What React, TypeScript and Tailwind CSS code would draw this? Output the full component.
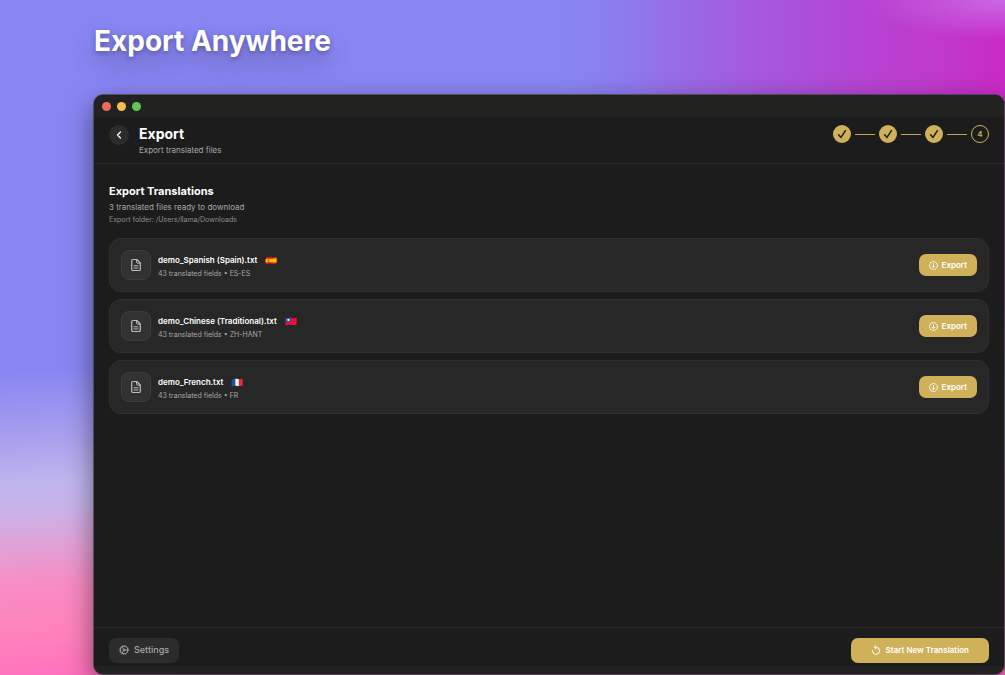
import React from 'react';
import { ChevronLeft } from 'lucide-react';

const files = [
  { name: 'demo_Spanish (Spain).txt', fields: 43, code: 'ES-ES', flag: 'es' },
  { name: 'demo_Chinese (Traditional).txt', fields: 43, code: 'ZH-HANT', flag: 'tw' },
  { name: 'demo_French.txt', fields: 43, code: 'FR', flag: 'fr' },
];

const steps = [1, 2, 3, 4];
const currentStep = 4;

const Flag: React.FC<{ code: string }> = ({ code }) => {
  const wave = 'M.6 1.6C3 .6 5 .7 7 1s3 .1 4.600-.5v7C9.800 8.200 8.500 8.200 6.500 7.900S2.500 7.800.6 8.500z';
  return (
    <svg className="w-3 h-[9px]" viewBox="0 0 12 9" aria-hidden="true">
      <clipPath id={`flag-${code}`}>
        <path d={wave} />
      </clipPath>
      <g clipPath={`url(#flag-${code})`}>
        {code === 'es' && (
          <>
            <rect width="12" height="9" fill="#d9141c" />
            <path d="M0 3.200C4 2 7 3.300 12 2.300v3.900C8 7 4 5.600 0 6.800z" fill="#fdc900" />
            <rect x="2.500" y="3.500" width="2" height="2" rx=".5" fill="#b5562c" />
          </>
        )}
        {code === 'tw' && (
          <>
            <rect width="12" height="9" fill="#ee1038" />
            <rect width="6" height="4.800" fill="#1c57b5" />
            <circle cx="3.400" cy="2.900" r="1.100" fill="#fff" />
          </>
        )}
        {code === 'fr' && (
          <>
            <rect width="4.300" height="9" fill="#1356a5" />
            <rect x="4.300" width="3.600" height="9" fill="#f4f4f4" />
            <rect x="7.900" width="4.100" height="9" fill="#ec2a36" />
          </>
        )}
      </g>
    </svg>
  );
};

const CheckIcon = () => (
  <svg className="w-2.5 h-2.5" viewBox="0 0 10 10" fill="none" stroke="currentColor" strokeWidth="1.500" strokeLinecap="round" strokeLinejoin="round" aria-hidden="true">
    <path d="M1.600 5.700L4 8.400L8.400 1.600" />
  </svg>
);

const FileIcon = () => (
  <svg className="w-3 h-3.5" viewBox="0 0 12 14" fill="none" stroke="currentColor" strokeWidth="1.200" strokeLinejoin="round" strokeLinecap="round" aria-hidden="true">
    <path d="M6.800 1.500H3A1.300 1.300 0 0 0 1.700 2.800v8.400A1.300 1.300 0 0 0 3 12.500h6a1.300 1.300 0 0 0 1.300-1.300V5z" />
    <path d="M6.600 1.700V4a1.200 1.200 0 0 0 1.200 1.200h2.300M4 7.800h4M4 10h4" strokeWidth="1" />
  </svg>
);

const DownloadIcon = () => (
  <svg className="w-[9px] h-[9px]" viewBox="0 0 9 9" fill="none" stroke="currentColor" strokeWidth=".8" strokeLinecap="round" strokeLinejoin="round" aria-hidden="true">
    <circle cx="4.500" cy="4.500" r="4" />
    <path d="M4.500 2.400v4M3 5.100l1.500 1.500L6 5.100" />
  </svg>
);

const GearIcon = () => (
  <svg className="w-2.5 h-2.5" viewBox="0 0 10 10" fill="none" stroke="currentColor" strokeLinecap="round" aria-hidden="true">
    <circle cx="5" cy="5" r="3.800" />
    <circle cx="5" cy="5" r="4.500" strokeWidth=".8" strokeDasharray="1 1.360" strokeLinecap="butt" />
    <path d="M5.900 5H8.800M4.500 4.200L3 1.800M4.500 5.800L3 8.200" strokeWidth=".8" />
    <circle cx="5" cy="5" r="1" strokeWidth=".8" />
  </svg>
);

const RestartIcon = () => (
  <svg className="w-2.5 h-2.5" viewBox="0 0 10 10" fill="none" stroke="currentColor" strokeLinecap="round" strokeLinejoin="round" aria-hidden="true">
    <path d="M1.400 5.600A3.600 3.600 0 1 0 5 2.200H3.400" />
    <path d="M4.900.6L3.200 2.200l1.700 1.700" />
  </svg>
);

const Stepper = () => (
  <ol className="flex items-center gap-1">
    {steps.map((step) => (
      <React.Fragment key={step}>
        {step > 1 && <li aria-hidden="true" className="w-5 h-px bg-[#c0a454]" />}
        {step < currentStep ? (
          <li className="w-[18px] h-[18px] rounded-full bg-[#cfb15a] text-[#1c1c1c] flex items-center justify-center">
            <CheckIcon />
          </li>
        ) : (
          <li className="w-[18px] h-[18px] rounded-full border border-[#cfb15a] text-[#cfb15a] text-[8px] font-semibold flex items-center justify-center">
            {step}
          </li>
        )}
      </React.Fragment>
    ))}
  </ol>
);

const App: React.FC = () => {
  return (
    <div className="min-h-screen flex flex-col overflow-hidden pl-[94px] pr-px pb-px font-['Inter',sans-serif] bg-[#8886f2] bg-[radial-gradient(ellipse_140px_40px_at_100%_0%,#c969e4_0%,transparent_100%),linear-gradient(176deg,transparent_50%,#a99fee_59%,#c0b5ee_65%,#cab2e9_69%,#e29fd5_74%,#f88cc3_79%,#ff82bb_85%,#ff6dbf_93%),linear-gradient(to_right,#8886f3_0%,#8886f3_56%,#8c7bee_62%,#9a68e4_69%,#a45bdf_74%,#ac4fda_80%,#b842d2_87%,#bf3acc_93%,#c92ac6_100%)]">
      <header className="h-[95px] shrink-0 pt-[23px]">
        <h1 className="text-[28px] leading-9 font-bold text-white [text-shadow:0_2px_5px_rgb(0_0_0/0.3),0_12px_24px_rgb(0_0_0/0.3)]">
          Export Anywhere
        </h1>
      </header>

      <div className="flex-1 flex flex-col rounded-[9px] overflow-hidden bg-[#1c1c1c] shadow-[0_0_0_1px_rgb(70_70_74/0.8),0_10px_28px_rgb(0_0_0/0.5)]">
        <div className="h-[22px] shrink-0 flex items-center gap-1.5 px-2 bg-[#222220]">
          <span className="w-[9px] h-[9px] rounded-full bg-[#ed6a5f]" />
          <span className="w-[9px] h-[9px] rounded-full bg-[#f5bf4f]" />
          <span className="w-[9px] h-[9px] rounded-full bg-[#61c554]" />
        </div>

        <div className="h-[47px] shrink-0 flex items-start justify-between px-[15px] pt-2 border-b border-[#2b2b2b]">
          <div className="flex items-start gap-2.5">
            <button aria-label="Back" className="w-5 h-5 rounded-full bg-[#2c2c2c] text-white flex items-center justify-center">
              <ChevronLeft size={12} strokeWidth={2.5} />
            </button>
            <div>
              <h2 className="text-[14px] leading-[18px] font-bold text-white">Export</h2>
              <p className="text-[8px] leading-[14px] text-[#a8a8a8]">Export translated files</p>
            </div>
          </div>
          <Stepper />
        </div>

        <main className="flex-1 px-[15px] pt-[19px]">
          <h3 className="text-[11px] leading-4 font-bold text-white">Export Translations</h3>
          <p className="text-[8px] leading-4 text-[#a8a8a8]">3 translated files ready to download</p>
          <p className="text-[7px] leading-[10px] text-[#8c8c8c]">Export folder: /Users/llama/Downloads</p>

          <ul className="mt-[13px] flex flex-col gap-[7px]">
            {files.map((file) => (
              <li key={file.code} className="h-[54px] flex items-center gap-[7px] px-[11px] rounded-xl border border-[#303030] bg-[#272727]">
                <div className="w-[30px] h-[30px] rounded-lg border border-[#3c3c3c] bg-[#323232] text-[#bcbcbc] flex items-center justify-center">
                  <FileIcon />
                </div>
                <div className="flex-1 pt-[3px]">
                  <div className="flex items-center gap-2">
                    <span className="text-[8px] leading-[13px] font-semibold text-white">{file.name}</span>
                    <Flag code={file.flag} />
                  </div>
                  <p className="text-[7px] leading-[13px] text-[#a8a8a8]">
                    {file.fields} translated fields • {file.code}
                  </p>
                </div>
                <button className="h-[22px] px-2.5 flex items-center gap-1 rounded-[7px] bg-[#cfb15a] text-white text-[8px] font-semibold">
                  <DownloadIcon />
                  Export
                </button>
              </li>
            ))}
          </ul>
        </main>

        <footer className="h-[39px] shrink-0 flex items-center justify-between px-[15px] pt-1.5 border-t border-[#2b2b2b]">
          <button className="h-[25px] px-2.5 flex items-center gap-[5px] rounded-[7px] bg-[#2c2c2c] text-[#a8a8a8] text-[9px] font-medium">
            <GearIcon />
            Settings
          </button>
          <button className="h-[25px] px-5 flex items-center gap-[5px] rounded-[7px] bg-[#cfb15a] text-white text-[8px] font-semibold">
            <RestartIcon />
            Start New Translation
          </button>
        </footer>
        <div className="h-2 shrink-0 bg-[#222220]" />
      </div>
    </div>
  );
};

export default App;
